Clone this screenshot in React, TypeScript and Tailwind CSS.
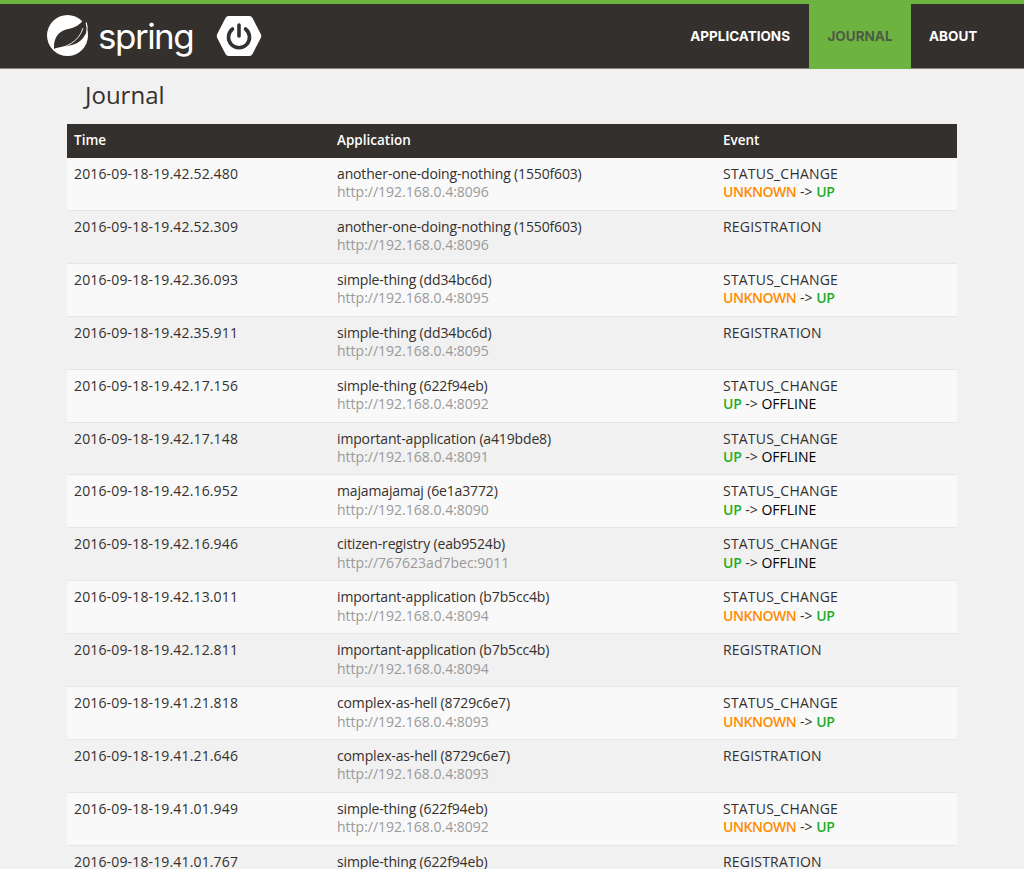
import React from 'react';

type Row = {
  time: string;
  name: string;
  url: string;
  from?: 'UNKNOWN' | 'UP';
  to?: 'UP' | 'OFFLINE';
};

const rows: Row[] = [
  { time: '2016-09-18-19.42.52.480', name: 'another-one-doing-nothing (1550f603)', url: 'http://192.168.0.4:8096', from: 'UNKNOWN', to: 'UP' },
  { time: '2016-09-18-19.42.52.309', name: 'another-one-doing-nothing (1550f603)', url: 'http://192.168.0.4:8096' },
  { time: '2016-09-18-19.42.36.093', name: 'simple-thing (dd34bc6d)', url: 'http://192.168.0.4:8095', from: 'UNKNOWN', to: 'UP' },
  { time: '2016-09-18-19.42.35.911', name: 'simple-thing (dd34bc6d)', url: 'http://192.168.0.4:8095' },
  { time: '2016-09-18-19.42.17.156', name: 'simple-thing (622f94eb)', url: 'http://192.168.0.4:8092', from: 'UP', to: 'OFFLINE' },
  { time: '2016-09-18-19.42.17.148', name: 'important-application (a419bde8)', url: 'http://192.168.0.4:8091', from: 'UP', to: 'OFFLINE' },
  { time: '2016-09-18-19.42.16.952', name: 'majamajamaj (6e1a3772)', url: 'http://192.168.0.4:8090', from: 'UP', to: 'OFFLINE' },
  { time: '2016-09-18-19.42.16.946', name: 'citizen-registry (eab9524b)', url: 'http://767623ad7bec:9011', from: 'UP', to: 'OFFLINE' },
  { time: '2016-09-18-19.42.13.011', name: 'important-application (b7b5cc4b)', url: 'http://192.168.0.4:8094', from: 'UNKNOWN', to: 'UP' },
  { time: '2016-09-18-19.42.12.811', name: 'important-application (b7b5cc4b)', url: 'http://192.168.0.4:8094' },
  { time: '2016-09-18-19.41.21.818', name: 'complex-as-hell (8729c6e7)', url: 'http://192.168.0.4:8093', from: 'UNKNOWN', to: 'UP' },
  { time: '2016-09-18-19.41.21.646', name: 'complex-as-hell (8729c6e7)', url: 'http://192.168.0.4:8093' },
  { time: '2016-09-18-19.41.01.949', name: 'simple-thing (622f94eb)', url: 'http://192.168.0.4:8092', from: 'UNKNOWN', to: 'UP' },
  { time: '2016-09-18-19.41.01.767', name: 'simple-thing (622f94eb)', url: 'http://192.168.0.4:8092' },
];

const Status: React.FC<{ value: string }> = ({ value }) => {
  if (value === 'UNKNOWN') return <span className="font-semibold tracking-[-0.45px] text-[#ff8c00]">UNKNOWN</span>;
  if (value === 'UP') return <span className="font-semibold tracking-[-0.2px] text-[#1fae1f]">UP</span>;
  return <span className="text-black">{value}</span>;
};

const SpringLeaf = () => (
  <svg width="44" height="44" viewBox="0 0 44 44" className="block shrink-0">
    <circle cx="21.5" cy="21.5" r="20.5" fill="#fff" />
    <path
      d="M8 33 C8 24 12 17 22 15 C29 13.5 34 11 38.5 4.5 L44 4 L44 8 C42 14 41 19 37 24 C32 31 22 32 15 33 C12 33.5 10 34 8 35 Z"
      fill="#34302d"
    />
    <path d="M40.2 8.5 C42 14 41.5 24 35 32" fill="none" stroke="#fff" strokeWidth="1.2" />
    <path d="M9 35.5 C20 33 33 28 37 14" fill="none" stroke="#fff" strokeWidth="0.9" />
  </svg>
);

const BootLogo = () => (
  <svg width="46" height="42" viewBox="0 0 46 42" className="block shrink-0">
    <path d="M12.5 1 H33.5 Q35.5 1 36.5 3 L44.5 18.5 Q46 21 44.5 23.5 L36.5 39 Q35.5 41 33.5 41 H12.5 Q10.5 41 9.5 39 L1.5 23.5 Q0 21 1.5 18.5 L9.5 3 Q10.5 1 12.5 1 Z" fill="#fff" />
    <path d="M16.5 14 A10.5 10.5 0 1 0 29.5 14" fill="none" stroke="#34302d" strokeWidth="3.6" strokeLinecap="round" />
    <path d="M23 10 V21" fill="none" stroke="#34302d" strokeWidth="3.6" strokeLinecap="round" />
  </svg>
);

export default function App() {
  return (
    <div className="h-[869px] overflow-hidden bg-[#f1f1f1] font-['Open_Sans','Noto_Sans',sans-serif] text-[14px] text-[#34302d]">
      <header className="h-[69px] border-t-4 border-b border-t-[#6db33f] border-b-[#8a8580] bg-[#34302d] flex items-stretch justify-between">
        <div className="flex items-center pl-[46px]">
          <SpringLeaf />
          <span className="ml-[8px] w-[118px] font-['Inter',sans-serif] text-[35px] leading-[44px] tracking-[-1.5px] text-white">spring</span>
          <BootLogo />
        </div>
        <nav className="flex items-stretch font-['Inter',sans-serif] font-bold text-[13.5px]">
          <a className="flex items-center pr-[19px] text-white">APPLICATIONS</a>
          <a className="flex items-center w-[102px] justify-center bg-[#6db33f] text-[#4d5a46] -mt-1 -mb-px pt-[3px]">JOURNAL</a>
          <a className="flex items-center justify-start pl-[18px] w-[113px] text-white">ABOUT</a>
        </nav>
      </header>

      <main className="mx-[67px]">
        <h2 className="text-[24px] leading-[30px] pl-[18px] pt-[11px] pb-[14px]">Journal</h2>
        <table className="w-[890px] table-fixed border-separate border-spacing-0">
          <colgroup>
            <col className="w-[263px]" />
            <col className="w-[386px]" />
            <col />
          </colgroup>
          <thead>
            <tr className="h-[34px] bg-[#34302d] text-white text-left text-[13.5px]">
              <th className="px-[7px] pb-px font-semibold">Time</th>
              <th className="px-[7px] pb-px font-semibold">Application</th>
              <th className="px-[7px] pb-px font-semibold">Event</th>
            </tr>
          </thead>
          <tbody>
            {rows.map((row, i) => (
              <tr key={row.time} className={`align-top ${i % 2 === 0 ? 'bg-[#f9f9f9]' : 'bg-[#f1f1f1]'}`}>
                <td className="h-[52.92px] border-b border-[#e6e6e6] px-[7px] pt-[7px] leading-[18.45px] tracking-[0.15px]">{row.time}</td>
                <td className="h-[52.92px] border-b border-[#e6e6e6] px-[7px] pt-[7px] leading-[18.45px]">
                  <span className="tracking-[-0.15px]">{row.name}</span>
                  <br />
                  <span className="text-[#999]">{row.url}</span>
                </td>
                <td className="h-[52.92px] border-b border-[#e6e6e6] px-[7px] pt-[7px] leading-[18.45px]">
                  <span className="tracking-[0.2px]">{row.from ? 'STATUS_CHANGE' : 'REGISTRATION'}</span>
                  {row.from && row.to && (
                    <>
                      <br />
                      <Status value={row.from} /> -&gt; <Status value={row.to} />
                    </>
                  )}
                </td>
              </tr>
            ))}
          </tbody>
        </table>
      </main>
    </div>
  );
}
